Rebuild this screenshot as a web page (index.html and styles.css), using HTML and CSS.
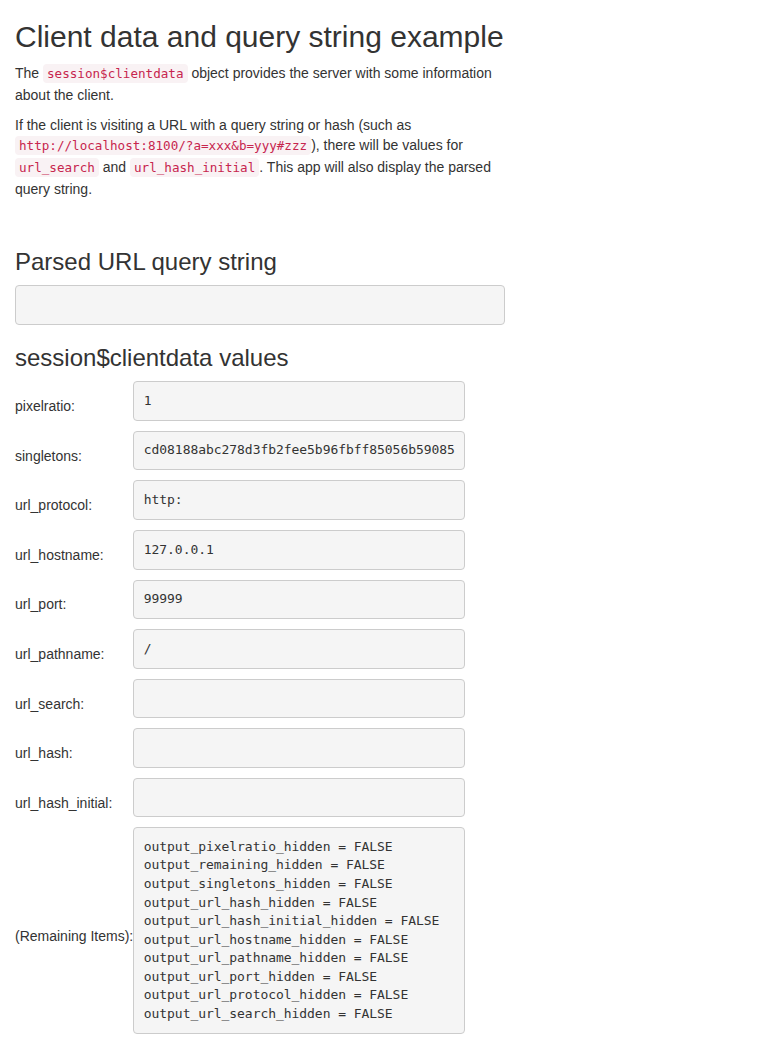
FILE: index.html
```html
<!DOCTYPE html>
<html>
<head>
<meta charset="utf-8">
<title>Client data and query string example</title>
<link rel="stylesheet" href="styles.css">
</head>
<body>
<div class="container-fluid">
  <h2 class="title">Client data and query string example</h2>
  <div class="row">
    <div class="col-main">
      <p>The <code>session$clientdata</code> object provides the server with some information about the client.</p>
      <p>If the client is visiting a URL with a query string or hash (such as <code>http://localhost:8100/?a=xxx&amp;b=yyy#zzz</code>), there will be values for <code>url_search</code> and <code>url_hash_initial</code>. This app will also display the parsed query string.</p>
      <div class="spacer"></div>
      <h3>Parsed URL query string</h3>
      <pre class="shiny-text-output"></pre>
      <h3>session$clientdata values</h3>
      <table class="cd-table">
        <tr><td class="cd-label">pixelratio:</td><td><pre class="shiny-text-output">1</pre></td></tr>
        <tr><td class="cd-label">singletons:</td><td><pre class="shiny-text-output">cd08188abc278d3fb2fee5b96fbff85056b59085</pre></td></tr>
        <tr><td class="cd-label">url_protocol:</td><td><pre class="shiny-text-output">http:</pre></td></tr>
        <tr><td class="cd-label">url_hostname:</td><td><pre class="shiny-text-output">127.0.0.1</pre></td></tr>
        <tr><td class="cd-label">url_port:</td><td><pre class="shiny-text-output">99999</pre></td></tr>
        <tr><td class="cd-label">url_pathname:</td><td><pre class="shiny-text-output">/</pre></td></tr>
        <tr><td class="cd-label">url_search:</td><td><pre class="shiny-text-output"></pre></td></tr>
        <tr><td class="cd-label">url_hash:</td><td><pre class="shiny-text-output"></pre></td></tr>
        <tr><td class="cd-label">url_hash_initial:</td><td><pre class="shiny-text-output"></pre></td></tr>
        <tr><td class="cd-label">(Remaining Items):</td><td><pre class="shiny-text-output">output_pixelratio_hidden = FALSE
output_remaining_hidden = FALSE
output_singletons_hidden = FALSE
output_url_hash_hidden = FALSE
output_url_hash_initial_hidden = FALSE
output_url_hostname_hidden = FALSE
output_url_pathname_hidden = FALSE
output_url_port_hidden = FALSE
output_url_protocol_hidden = FALSE
output_url_search_hidden = FALSE</pre></td></tr>
      </table>
    </div>
  </div>
</div>
</body>
</html>
```
FILE: styles.css
```css
* {
  box-sizing: border-box;
}
html, body {
  margin: 0;
  background: #fff;
}
body {
  font-family: "Liberation Sans", Arial, Helvetica, sans-serif;
  font-size: 14px;
  line-height: 1.42857143;
  color: #333;
}
.container-fluid {
  padding: 0 15px;
}
.row {
  display: flex;
  margin: 0 -15px;
}
.col-main {
  width: 66.66666667%;
  padding: 0 15px;
}
h2, h3 {
  font-family: inherit;
  font-weight: 500;
  line-height: 1.1;
  color: inherit;
}
.title {
  font-size: 30px;
  margin: 20px 0 10px;
}
h3 {
  font-size: 24px;
  margin: 20px 0 10px;
}
p {
  margin: 0 0 10px;
}
code {
  font-family: "DejaVu Sans Mono", monospace;
  font-size: 90%;
  line-height: 22px;
  padding: 2px 4px;
  color: #c7254e;
  background-color: #f9f2f4;
  border-radius: 4px;
}
.spacer {
  height: 20px;
}
pre.shiny-text-output {
  display: block;
  margin: 0 0 10px;
  padding: 9.5px;
  min-height: calc(13px * 1.42857143 + 21px);
  font-family: "DejaVu Sans Mono", monospace;
  font-size: 13px;
  line-height: 1.42857143;
  letter-spacing: -0.05px;
  color: #333;
  white-space: pre;
  background-color: #f5f5f5;
  border: 1px solid #ccc;
  border-radius: 4px;
}
.cd-table {
  border-collapse: collapse;
  border-spacing: 0;
}
.cd-table td {
  padding: 0;
}
.cd-label {
  vertical-align: middle;
  white-space: nowrap;
}
```
